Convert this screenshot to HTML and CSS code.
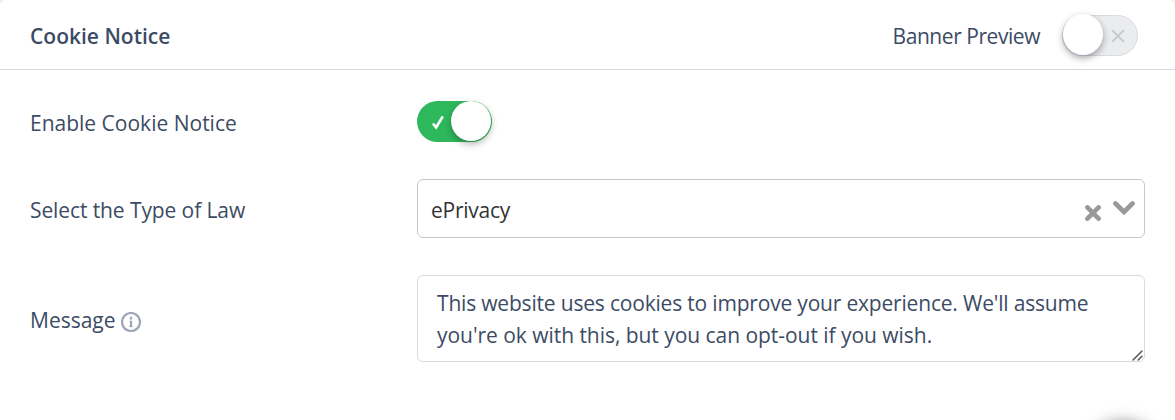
FILE: index.html
```html
<!DOCTYPE html>
<html lang="en">
<head>
  <meta charset="utf-8">
  <title>Cookie Notice</title>
  <link rel="stylesheet" href="styles.css">
</head>
<body>

<section class="card">
  <header class="card-header">
    <h4>Cookie Notice</h4>
    <div class="preview">
      <span class="preview-label">Banner Preview</span>
      <div class="toggle">
        <span class="knob"></span>
        <svg class="cross" width="14" height="14" viewBox="0 0 14 14"><path d="M1.2 1.2l11.6 11.6M12.8 1.2L1.2 12.8"/></svg>
      </div>
    </div>
  </header>

  <div class="card-body">
    <div class="row row-enable">
      <label class="label-enable">Enable Cookie Notice</label>
      <div class="toggle on">
        <svg class="check" width="14" height="15" viewBox="0 0 14 15"><path d="M2 8.5l3.1 4L11.8 1.3"/></svg>
        <span class="knob"></span>
      </div>
    </div>

    <div class="row row-law">
      <label class="label-law">Select the Type of Law</label>
      <div class="select">
        <span class="selected">ePrivacy</span>
        <svg class="clear" width="16" height="16" viewBox="0 0 16 16"><path d="M2.4 2.4l11.2 11.2M13.6 2.4L2.4 13.6"/></svg>
        <svg class="arrow" width="22" height="15" viewBox="0 0 22 15"><path d="M2.5 2.5L11 11l8.5-8.5"/></svg>
      </div>
    </div>

    <div class="row row-message">
      <label class="label-message">Message
        <svg class="info" width="20" height="20" viewBox="0 0 20 20">
          <circle cx="10" cy="10" r="9"/>
          <path d="M10 4.8v2.6M10 8.7v6.3"/>
          <path class="serif" d="M8.6 9.2H10M8.2 14.6h3.6"/>
        </svg>
      </label>
      <div class="message">
        <div class="textarea" role="textbox" contenteditable="true" spellcheck="false">This website uses cookies to improve your experience. We'll assume you're ok with this, but you can opt-out if you wish.</div>
        <svg class="grip" width="11" height="11" viewBox="0 0 11 11"><path d="M1 10l9-9M6.2 10L10 6.2"/></svg>
      </div>
    </div>
  </div>

  <div class="floating">
    <div class="help-button"></div>
  </div>
</section>

</body>
</html>
```

FILE: styles.css
```css
* {
  box-sizing: border-box;
}
body {
  margin: 0;
  background: #f1f1f3;
  color: #3c4b64;
  font-family: "Segoe UI", "Open Sans", "Noto Sans", sans-serif;
  font-size: 21px;
}
.card {
  position: relative;
  height: 420px;
  background: #fff;
  border-radius: 6px 6px 0 0;
}
.card-header {
  display: flex;
  justify-content: space-between;
  align-items: center;
  height: 70px;
  padding: 2px 37px 0 30px;
  border-bottom: 1px solid #d8dbe0;
}
h4 {
  margin: 0;
  font-size: 21px;
  font-weight: 600;
}
.preview {
  display: flex;
  align-items: center;
  gap: 22px;
}
.preview-label {
  letter-spacing: -.45px;
}

.toggle {
  display: flex;
  align-items: center;
  width: 76px;
  height: 41px;
  border: 1px solid #d8dbe0;
  border-radius: 21px;
  background: #ebecee;
}
.knob {
  width: 40px;
  height: 41px;
  margin: -2px 0 0 0;
  border-radius: 50%;
  background: #fff;
  box-shadow: 0 3px 7px rgba(30, 30, 50, .4);
}
.on {
  width: 75px;
  border: 0;
  background: #2eb85c;
}
.on .knob {
  margin: -1px 0 0 6px;
  height: 40px;
  box-shadow: 0 3px 7px rgba(0, 0, 0, .3);
}

svg {
  display: block;
  flex: none;
  fill: none;
  stroke-linecap: round;
}
.cross {
  margin-left: 8px;
  stroke: #c8cbd0;
  stroke-width: 2;
  stroke-linecap: butt;
}
.check {
  margin: 1px 0 0 14px;
  stroke: #fff;
  stroke-width: 2.6;
  stroke-linecap: butt;
}

.card-body {
  padding: 31px 30px 0;
}
.row {
  display: grid;
  grid-template-columns: 387px 1fr;
  align-items: center;
}
.row label {
  padding-top: 2px;
}
.row-enable {
  height: 41px;
}
.row-law {
  margin-top: 37px;
}
.row-message {
  margin-top: 37px;
}
.label-law {
  letter-spacing: -.1px;
}
.label-message {
  display: flex;
  align-items: center;
  gap: 5px;
}
.info {
  margin-top: 4px;
  stroke: #9da5b8;
  stroke-width: 2.2;
  stroke-linecap: butt;
}
.serif {
  stroke-width: 1;
}

.select {
  display: flex;
  align-items: center;
  height: 59px;
  padding: 0 9px 0 13px;
  border: 1px solid #c6c8ca;
  border-radius: 6px;
}
.selected {
  flex: 1;
  padding-top: 2px;
  color: #333;
  letter-spacing: -.25px;
}
.clear, .arrow {
  stroke: #999;
  stroke-width: 4.6;
}
.clear {
  margin: 8px 12px 0 0;
}

.message {
  position: relative;
}
.textarea {
  height: 87px;
  padding: 11px 19px;
  border: 1px solid #d8dbe0;
  border-radius: 6px;
  outline: none;
  line-height: 32px;
  letter-spacing: -.04px;
}
.textarea::first-line {
  letter-spacing: -.19px;
}
.grip {
  position: absolute;
  right: 2px;
  bottom: 1px;
  stroke: #555;
  stroke-width: 1.5;
}

/* floating button just below the fold */
.floating {
  position: absolute;
  right: 0;
  bottom: 0;
  width: 120px;
  height: 30px;
  overflow: hidden;
}
.help-button {
  width: 80px;
  height: 80px;
  margin: 33px 0 0 28px;
  border-radius: 50%;
  box-shadow: 0 0 16px rgba(0, 0, 0, .5);
}
```
